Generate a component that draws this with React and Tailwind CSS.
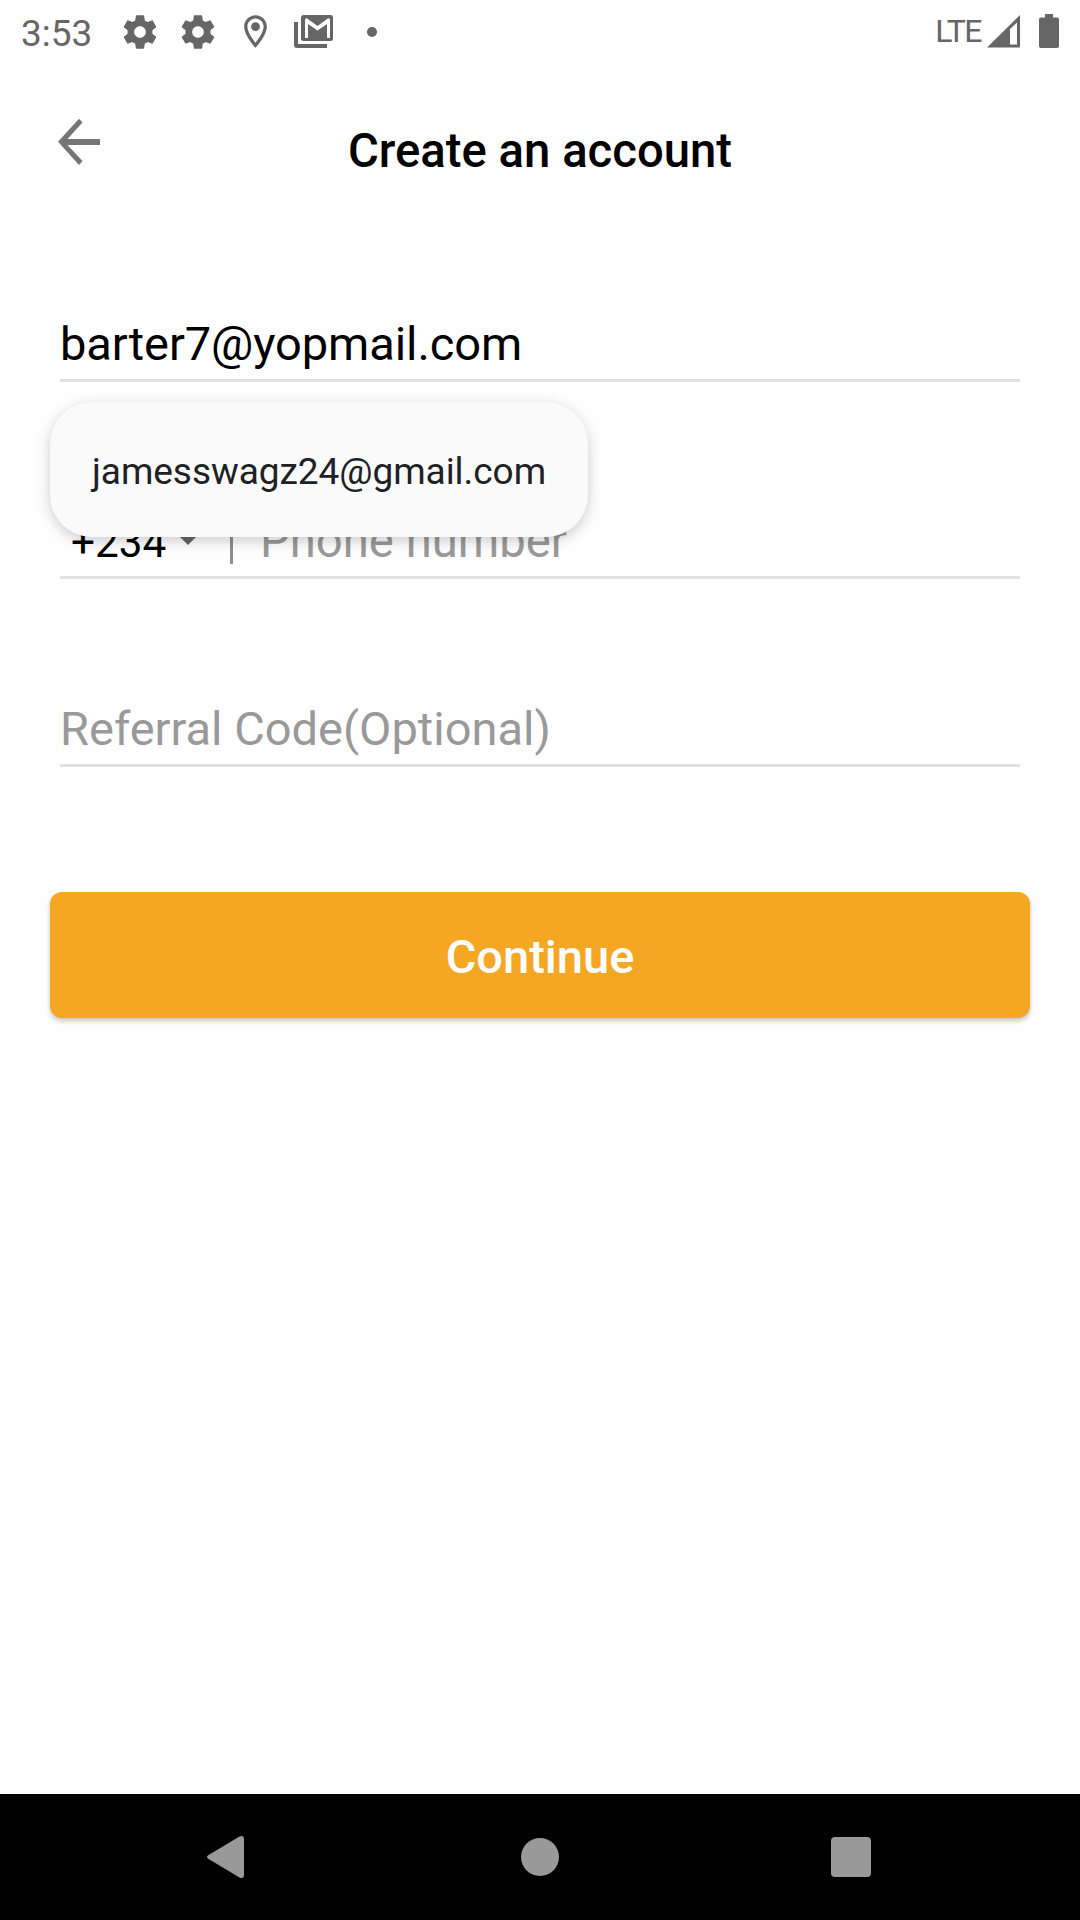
const GEAR =
  "M19.43 12.98c.04-.32.07-.64.07-.98s-.03-.66-.07-.98l2.11-1.65c.19-.15.24-.42.12-.64l-2-3.46c-.12-.22-.39-.3-.61-.22l-2.49 1c-.52-.4-1.08-.73-1.69-.98l-.38-2.65C14.46 2.18 14.25 2 14 2h-4c-.25 0-.46.18-.49.42l-.38 2.65c-.61.25-1.17.59-1.69.98l-2.49-1c-.23-.09-.49 0-.61.22l-2 3.46c-.13.22-.07.49.12.64l2.11 1.65c-.04.32-.07.65-.07.98s.03.66.07.98l-2.11 1.65c-.19.15-.24.42-.12.64l2 3.46c.12.22.39.3.61.22l2.49-1c.52.4 1.08.73 1.69.98l.38 2.65c.03.24.24.42.49.42h4c.25 0 .46-.18.49-.42l.38-2.65c.61-.25 1.17-.59 1.69-.98l2.49 1c.23.09.49 0 .61-.22l2-3.46c.12-.22.07-.49-.12-.64l-2.11-1.65zM12 15.5c-1.93 0-3.5-1.57-3.5-3.5s1.57-3.5 3.5-3.5 3.5 1.57 3.5 3.5-1.57 3.5-3.5 3.5z";

function Gear() {
  return (
    <svg className="size-10 shrink-0" viewBox="0 0 24 24" fill="currentColor">
      <path d={GEAR} />
    </svg>
  );
}

function StatusBar() {
  return (
    <div className="flex h-[63px] items-center pl-[21px] pr-[21px] text-[#666]">
      <span className="mt-[3px] w-[99px] text-[37px] leading-[43px]">3:53</span>
      <Gear />
      <span className="w-[18px]" />
      <Gear />
      <svg className="ml-[18px] size-[39px]" viewBox="0 0 24 24" fill="currentColor">
        <path d="M12 2C8.13 2 5 5.13 5 9c0 5.25 7 13 7 13s7-7.75 7-13c0-3.87-3.13-7-7-7zM7 9c0-2.76 2.24-5 5-5s5 2.24 5 5c0 2.88-2.88 7.19-5 9.88C9.92 16.21 7 11.85 7 9z" />
        <circle cx="12" cy="9" r="2.7" />
      </svg>
      <svg className="ml-[19px] h-[33px] w-[39px]" viewBox="0 0 39 33" fill="none">
        <rect x="7" width="32" height="26" rx="2.5" fill="currentColor" />
        <path d="M0 7h4v22h29v4H3a3 3 0 0 1-3-3z" fill="currentColor" />
        <path d="M11 23V5q0-2 2.200-1.600L23.500 11l10.300-7.600Q36 3 36 5v18h-3V9l-9.500 6.500L14 9v14z" fill="#fff" />
      </svg>
      <span className="ml-[34px] size-[10px] rounded-full bg-[#666]" />
      <span className="mb-[2px] ml-auto text-[32px] leading-[38px] tracking-[-1.5px]">LTE</span>
      <svg className="ml-[6px] h-[33px] w-[33px]" viewBox="0 0 33 33" fill="currentColor">
        <path fillRule="evenodd" d="M33 0v32.500H0zM23 14v15.500h7V7.500z" />
      </svg>
      <svg className="mb-[1px] ml-[19px] h-[34px] w-5" viewBox="0 0 20 34" fill="currentColor">
        <path d="M6 0h8v3.500h4a2 2 0 0 1 2 2V32a2 2 0 0 1-2 2H2a2 2 0 0 1-2-2V5.500a2 2 0 0 1 2-2h4z" />
      </svg>
    </div>
  );
}

function Header() {
  return (
    <header className="grid h-[118px] grid-cols-[1fr_auto_1fr] items-end">
      <svg className="mb-[15px] ml-[58px] h-12 w-[42px] text-[#757575]" viewBox="0 0 42 48" fill="currentColor">
        <path d="M0 23.800L21 .8l3.500 3.700L9.500 20.900H42v6H9.500l15 16.200-3.500 3.900z" />
      </svg>
      <h1 className="text-[47.25px] font-medium leading-[60px]">Create an account</h1>
      <span />
    </header>
  );
}

export default function App() {
  return (
    <div className="flex h-[1920px] w-[1080px] flex-col overflow-hidden bg-[#fefefe] font-[Roboto,sans-serif] text-black">
      <StatusBar />
      <Header />
      <main className="flex flex-1 flex-col px-[60px] pt-[133px]">
        <div className="relative h-[68px] border-b-[3px] border-[#e0e0e0]">
          <div className="text-[47px] leading-[60px] tracking-[-0.08px]">barter7@yopmail.com</div>
          <div className="absolute -left-[10px] top-[88px] z-10 flex h-[135px] w-[538px] items-center rounded-[42px] bg-[#fafafa] pl-[42px] pt-[4px] text-[37px] tracking-[-0.05px] text-[#202124] shadow-[0_4px_14px_rgba(0,0,0,0.2)]">
            jamesswagz24@gmail.com
          </div>
        </div>
        <div className="mt-[129px] flex h-[68px] items-baseline border-b-[3px] border-[#e0e0e0]">
          <span className="ml-[11px] w-[96px] text-[42.300px] leading-[60px]">+234</span>
          <svg className="ml-[8px] mt-[21px] h-[13px] w-[26px] self-start text-[#666]" viewBox="0 0 26 13" fill="currentColor">
            <path d="M0 0h26L13 13z" />
          </svg>
          <span className="ml-[29px] h-[53px] w-[3px] self-start bg-[#8e8e93]" />
          <span className="ml-[27px] text-[47.25px] leading-[60px] text-[#999]">Phone number</span>
        </div>
        <div className="mt-[120px] h-[68px] border-b-[3px] border-[#e0e0e0] text-[47px] leading-[60px] text-[#999]">
          Referral Code(Optional)
        </div>
        <button className="-mx-[10px] mt-[125px] h-[126px] rounded-xl bg-[#f5a623] pt-[3px] text-[47px] font-medium leading-[60px] text-white shadow-[0_3px_5px_rgba(0,0,0,0.22)]">
          Continue
        </button>
      </main>
      <nav className="flex h-[126px] items-center bg-black text-[#999]">
        <svg className="ml-[207px] h-[42px] w-[37px]" viewBox="0 0 37 42" fill="currentColor">
          <path d="M1.200 19.300L32.500.6Q37-1.400 37 3V39Q37 43.400 32.500 41.400L1.200 22.700Q-1.200 21 1.200 19.300z" />
        </svg>
        <span className="ml-[277px] size-[38px] rounded-full bg-[#999]" />
        <span className="ml-[272px] size-10 rounded bg-[#999]" />
      </nav>
    </div>
  );
}
